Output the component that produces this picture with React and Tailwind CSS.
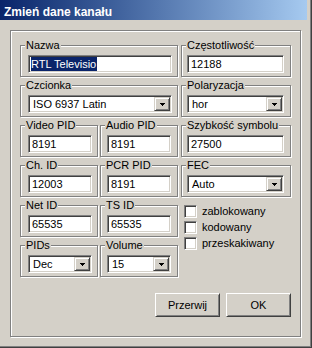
import React from "react";

function Group({ label, w, pl, children }) {
  return (
    <div
      className={`relative ${w} h-[32px] shrink-0 border border-[#808080] shadow-[1px_1px_0_#fff,inset_1px_1px_0_#fff] ${pl} pt-[9px]`}
    >
      <span className="absolute -top-[7px] left-[4px] px-[1px] bg-[#d4d0c8] leading-[13px] whitespace-nowrap">
        {label}
      </span>
      {children}
    </div>
  );
}

const sunken =
  "border border-t-[#808080] border-l-[#808080] border-b-white border-r-white shadow-[inset_1px_1px_0_#404040,inset_-1px_-1px_0_#d4d0c8]";

function TextInput({ w, value, selected }) {
  return (
    <div className={`${w} h-[18px] bg-white ${sunken} pl-[2px] flex items-center`}>
      {selected ? (
        <span className="bg-[#0a246a] text-white leading-[14px] pr-[1px]">{value}</span>
      ) : (
        <span className="leading-[14px] pl-[1px]">{value}</span>
      )}
    </div>
  );
}

function Arrow() {
  return (
    <svg width="5" height="3" viewBox="0 0 5 3" shapeRendering="crispEdges">
      <rect x="0" y="0" width="5" height="1" fill="#000" />
      <rect x="1" y="1" width="3" height="1" fill="#000" />
      <rect x="2" y="2" width="1" height="1" fill="#000" />
    </svg>
  );
}

function Select({ w, value }) {
  return (
    <div className={`${w} h-[18px] bg-white ${sunken} p-[1px] flex items-stretch`}>
      <span className="flex-1 pl-[3px] leading-[14px] flex items-center">{value}</span>
      <div className="w-[16px] bg-[#d4d0c8] border border-t-[#d4d0c8] border-l-[#d4d0c8] border-b-[#404040] border-r-[#404040] shadow-[inset_1px_1px_0_#fff,inset_-1px_-1px_0_#808080] flex items-center justify-center">
        <Arrow />
      </div>
    </div>
  );
}

function Check({ label }) {
  return (
    <div className="flex items-center h-[13px] gap-[5px]">
      <div className={`w-[13px] h-[13px] bg-white ${sunken}`} />
      <span className="leading-[13px]">{label}</span>
    </div>
  );
}

function Btn({ children }) {
  return (
    <div className="w-[65px] h-[24px] bg-[#d4d0c8] border border-t-white border-l-white border-b-[#404040] border-r-[#404040] shadow-[inset_1px_1px_0_#d4d0c8,inset_-1px_-1px_0_#808080] flex items-center justify-center leading-[14px]">
      {children}
    </div>
  );
}

export default function App() {
  return (
    <div className="w-[312px] h-[348px] bg-[#d4d0c8] text-[11px] text-black font-['Liberation_Sans',Arial,sans-serif] shadow-[inset_-1px_-1px_0_#404040,inset_-2px_-2px_0_#808080] overflow-hidden">
      <div className="mr-[5px] h-[20px] bg-gradient-to-r from-[#0a246a] to-[#a6caf0] pl-[4px] pt-[5px]">
        <div className="text-white font-bold text-[12px] leading-[14px] whitespace-nowrap">
          Zmień dane kanału
        </div>
      </div>
      <div className="ml-[10px] mt-[10px] w-[291px] h-[307px] border border-[#808080] shadow-[1px_1px_0_#fff,inset_1px_1px_0_#fff] pl-[9px] pt-[14px]">
        <div className="flex gap-[3px]">
          <div className="w-[158px] flex flex-col gap-[8px]">
            <Group label="Nazwa" w="w-[158px]" pl="pl-[7px]">
              <TextInput w="w-[144px]" value="RTL Televisio" selected />
            </Group>
            <Group label="Czcionka" w="w-[158px]" pl="pl-[7px]">
              <Select w="w-[144px]" value="ISO 6937 Latin" />
            </Group>
            <div className="flex gap-[2px]">
              <Group label="Video PID" w="w-[78px]" pl="pl-[7px]">
                <TextInput w="w-[64px]" value="8191" />
              </Group>
              <Group label="Audio PID" w="w-[78px]" pl="pl-[6px]">
                <TextInput w="w-[64px]" value="8191" />
              </Group>
            </div>
            <div className="flex gap-[2px]">
              <Group label="Ch. ID" w="w-[78px]" pl="pl-[7px]">
                <TextInput w="w-[64px]" value="12003" />
              </Group>
              <Group label="PCR PID" w="w-[78px]" pl="pl-[6px]">
                <TextInput w="w-[64px]" value="8191" />
              </Group>
            </div>
            <div className="flex gap-[2px]">
              <Group label="Net ID" w="w-[78px]" pl="pl-[7px]">
                <TextInput w="w-[64px]" value="65535" />
              </Group>
              <Group label="TS ID" w="w-[78px]" pl="pl-[6px]">
                <TextInput w="w-[64px]" value="65535" />
              </Group>
            </div>
            <div className="flex gap-[2px]">
              <Group label="PIDs" w="w-[78px]" pl="pl-[7px]">
                <Select w="w-[64px]" value="Dec" />
              </Group>
              <Group label="Volume" w="w-[78px]" pl="pl-[6px]">
                <Select w="w-[64px]" value="15" />
              </Group>
            </div>
          </div>
          <div className="w-[110px] flex flex-col gap-[8px]">
            <Group label="Częstotliwość" w="w-[110px]" pl="pl-[5px]">
              <TextInput w="w-[97px]" value="12188" />
            </Group>
            <Group label="Polaryzacja" w="w-[110px]" pl="pl-[5px]">
              <Select w="w-[97px]" value="hor" />
            </Group>
            <Group label="Szybkość symbolu" w="w-[110px]" pl="pl-[5px]">
              <TextInput w="w-[97px]" value="27500" />
            </Group>
            <Group label="FEC" w="w-[110px]" pl="pl-[5px]">
              <Select w="w-[97px]" value="Auto" />
            </Group>
            <div className="flex flex-col gap-[3px] pl-[3px]">
              <Check label="zablokowany" />
              <Check label="kodowany" />
              <Check label="przeskakiwany" />
            </div>
          </div>
        </div>
        <div className="w-[271px] mt-[16px] flex justify-end gap-[6px]">
          <Btn>Przerwij</Btn>
          <Btn>OK</Btn>
        </div>
      </div>
    </div>
  );
}
